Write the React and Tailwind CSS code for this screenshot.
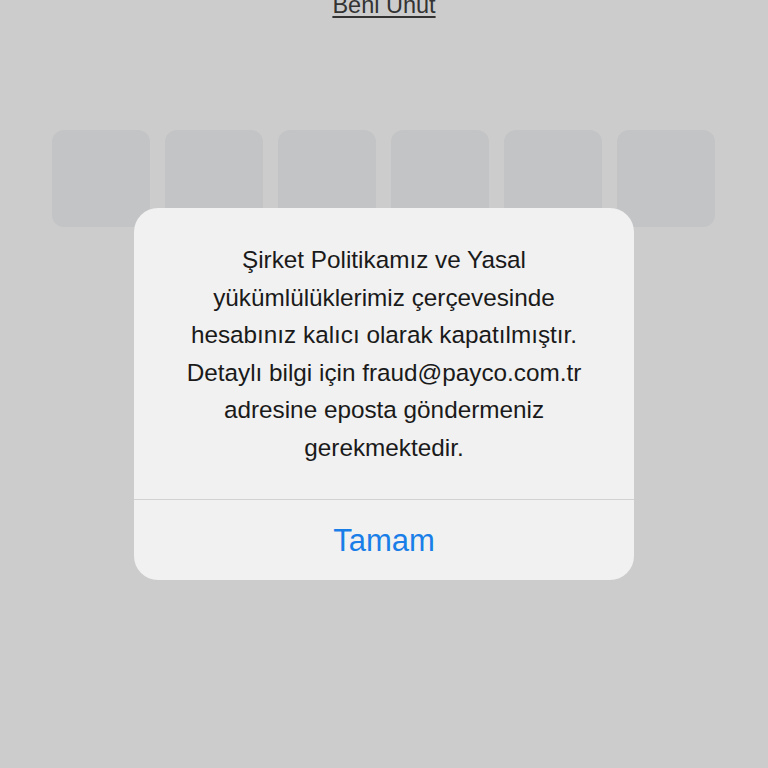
export default function App() {
  const boxes = [0, 1, 2, 3, 4, 5];
  return (
    <div className="relative w-[768px] h-[768px] overflow-hidden bg-[#cccccc]" style={{ fontFamily: '"Liberation Sans", Arial, sans-serif' }}>
      <div className="flex justify-center -mt-[9px]">
        <span className="text-[23.5px] leading-[28px] text-[#333333] underline underline-offset-[3px] decoration-[1.5px]">Beni Unut</span>
      </div>
      <div className="flex gap-[15px] pl-[52px] mt-[111px]">
        {boxes.map((b) => (
          <div key={b} className="w-[98px] h-[97px] rounded-[12px] bg-[#c3c4c5]" />
        ))}
      </div>
      <div className="absolute left-[134px] top-[208px] w-[500px] h-[372px] rounded-[24px] bg-[#f1f1f1] flex flex-col overflow-hidden">
        <div className="h-[291px] flex flex-col justify-center items-center text-center text-[24.3px] leading-[37.5px] text-[#1a1a1a] px-[10px]">
          <p>Şirket Politikamız ve Yasal</p>
          <p>yükümlülüklerimiz çerçevesinde</p>
          <p>hesabınız kalıcı olarak kapatılmıştır.</p>
          <p>Detaylı bilgi için fraud@payco.com.tr</p>
          <p>adresine eposta göndermeniz</p>
          <p>gerekmektedir.</p>
        </div>
        <div className="h-px bg-[#d2d2d4]" />
        <div className="flex-1 flex items-center justify-center pt-[3px]">
          <span className="text-[31px] text-[#1a7ee8]">Tamam</span>
        </div>
      </div>
    </div>
  );
}
